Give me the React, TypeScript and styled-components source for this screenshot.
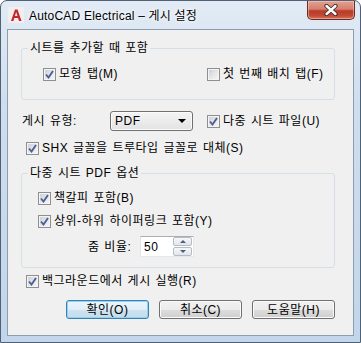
import styled, { createGlobalStyle } from "styled-components";

const GlobalStyle = createGlobalStyle`
  html, body {
    margin: 0;
    padding: 0;
    background: #fff;
  }
  body {
    font-family: "Liberation Sans", "Noto Sans CJK KR", sans-serif;
    font-size: 12px;
    letter-spacing: 0.5px;
    word-spacing: 1px;
    color: #000;
  }
  * {
    box-sizing: border-box;
  }
`;

const Window = styled.div`
  width: 361px;
  height: 343px;
  border: 1px solid #4f6275;
  border-radius: 7px 7px 0 0;
  background: linear-gradient(180deg, #e2ebf5 0%, #cfdeee 30%, #c2d5ea 100%);
  padding: 0 6px 6px 6px;
  display: flex;
  flex-direction: column;
`;

const TitleBar = styled.div`
  height: 28px;
  margin: 0 -6px;
  padding: 0 5px 0 7px;
  display: flex;
  align-items: flex-start;
`;

const AppIcon = styled.svg`
  width: 16px;
  height: 16px;
  margin-top: 6px;
  flex: none;
`;

const Title = styled.div`
  margin: 7px 0 0 5px;
  line-height: 16px;
  font-size: 12px;
  letter-spacing: 0.2px;
  word-spacing: 0;
  text-shadow: 0 0 6px #fff, 0 0 3px #fff;
`;

const CloseButton = styled.div`
  margin-left: auto;
  width: 48px;
  height: 19px;
  border: 1px solid #6b2b22;
  border-top: none;
  border-radius: 0 0 5px 5px;
  background: linear-gradient(180deg, #e3a091 0%, #d4806e 45%, #bb3a27 55%, #c04a35 80%, #d2735a 100%);
  box-shadow: inset 0 0 0 1px rgba(255, 220, 210, 0.45);
  display: flex;
  align-items: center;
  justify-content: center;

  svg {
    width: 14px;
    height: 12px;
  }
`;

const Client = styled.div`
  flex: 1;
  border: 1px solid #8c9db0;
  background: #f0f0f0;
  padding: 11px 18px 0 13px;
  display: flex;
  flex-direction: column;
`;

const Group = styled.fieldset<{ $top?: number }>`
  margin: ${p => p.$top ?? 0}px 0 0 0;
  border: 1px solid #d5dfe5;
  border-radius: 3px;
  padding: 0;
  min-width: 0;
`;

const Legend = styled.legend`
  margin-left: 6px;
  padding: 0 2px;
  line-height: 14px;
`;

const GroupBody = styled.div<{ $padLeft: number; $padTop: number; $padBottom: number }>`
  padding: ${p => p.$padTop}px 0 ${p => p.$padBottom}px ${p => p.$padLeft}px;
  display: flex;
  flex-direction: column;
`;

const CheckRow = styled.div`
  display: grid;
  grid-template-columns: 164px 1fr;
`;

const CheckLabel = styled.label<{ $indent?: number; $top?: number }>`
  display: flex;
  align-items: center;
  gap: 3px;
  height: 14px;
  line-height: 14px;
  white-space: nowrap;
  margin-left: ${p => p.$indent ?? 0}px;
  margin-top: ${p => p.$top ?? 0}px;
`;

const Box = styled.span`
  width: 13px;
  height: 13px;
  flex: none;
  border: 1px solid #8e8f8f;
  background: linear-gradient(135deg, #c9cbce 0%, #e4e5e7 50%, #f7f7f7 100%);
  box-shadow: inset 0 0 0 1px #f4f4f4;
  display: flex;
  align-items: center;
  justify-content: center;

  svg {
    width: 9px;
    height: 9px;
  }
`;

const TypeRow = styled.div`
  display: flex;
  align-items: center;
  margin: 11px 0 0 1px;
  height: 20px;
`;

const FieldLabel = styled.span<{ $width: number }>`
  width: ${p => p.$width}px;
  flex: none;
  line-height: 14px;
`;

const Combo = styled.div`
  width: 83px;
  height: 20px;
  border: 1px solid #707070;
  border-radius: 3px;
  background: linear-gradient(180deg, #f4f4f4 0%, #ececec 50%, #e2e2e2 100%);
  box-shadow: inset 0 0 0 1px #fbfbfb;
  display: flex;
  align-items: center;
  padding: 0 6px 0 4px;
  margin-right: 14px;

  span {
    flex: 1;
  }
`;

const Arrow = styled.i`
  width: 0;
  height: 0;
  border-left: 4px solid transparent;
  border-right: 4px solid transparent;
  border-top: 4px solid #000;
`;

const ZoomRow = styled.div`
  display: flex;
  align-items: center;
  margin: 8px 0 0 50px;
`;

const SpinEdit = styled.div`
  width: 54px;
  height: 21px;
  border: 1px solid #abadb3;
  border-left-color: #e2e3ea;
  border-right-color: #e3e9ef;
  border-bottom-color: #e3e9ef;
  background: #fff;
  display: flex;
  align-items: center;
  padding: 0 1px 0 3px;

  span {
    flex: 1;
  }
`;

const SpinButtons = styled.div`
  width: 19px;
  height: 19px;
  display: flex;
  flex-direction: column;
  gap: 1px;
`;

const SpinPart = styled.div<{ $down?: boolean }>`
  flex: 1;
  border: 1px solid #b7bcc4;
  border-radius: 2px;
  background: linear-gradient(180deg, #f6f7f9 0%, #e3e6ea 100%);
  display: flex;
  align-items: center;
  justify-content: center;

  &::after {
    content: "";
    width: 0;
    height: 0;
    border-left: 3px solid transparent;
    border-right: 3px solid transparent;
    ${p => (p.$down ? "border-top: 3px solid #4a5f84;" : "border-bottom: 3px solid #4a5f84;")}
  }
`;

const ButtonRow = styled.div`
  display: flex;
  gap: 10px;
  margin: 12px 0 0 45px;
`;

const Button = styled.button<{ $default?: boolean }>`
  width: 85px;
  height: 19px;
  padding: 0;
  font: inherit;
  font-size: 12px;
  line-height: 14px;
  letter-spacing: 0.5px;
  color: #000;
  border: 1px solid ${p => (p.$default ? "#3c7fb1" : "#707070")};
  border-radius: 3px;
  background: ${p =>
    p.$default
      ? "linear-gradient(180deg, #eaf6fd 0%, #e0eef7 50%, #cfe3f0 51%, #c4dbea 100%)"
      : "linear-gradient(180deg, #f2f2f2 0%, #ebebeb 50%, #dddddd 51%, #cfcfcf 100%)"};
  box-shadow: inset 0 0 0 1px ${p => (p.$default ? "#8fd3f5" : "#fbfbfb")};
`;

function Check({ checked }: { checked: boolean }) {
  return (
    <Box>
      {checked && (
        <svg viewBox="0 0 9 9">
          <path d="M1 4.5 L3.5 7.5 L8 1" fill="none" stroke="#4b5f9b" strokeWidth="1.9" />
        </svg>
      )}
    </Box>
  );
}

export default function App() {
  return (
    <>
      <GlobalStyle />
      <Window>
        <TitleBar>
          <AppIcon viewBox="0 0 16 16">
            <rect x="0" y="0" width="16" height="16" fill="#f3eded" />
            <path d="M3 14 L7 2.5 L9.5 2.5 L13.5 14 L11 14 L10 11 L6.3 11 L5.4 14 Z M6.9 9 L9.4 9 L8.2 5 Z" fill="#c4262e" fillRule="evenodd" />
          </AppIcon>
          <Title>AutoCAD Electrical – 게시 설정</Title>
          <CloseButton>
            <svg viewBox="0 0 14 12">
              <path d="M2.5 2 L11.5 10 M11.5 2 L2.5 10" stroke="#3a2a28" strokeWidth="4.2" strokeLinecap="round" />
              <path d="M2.5 2 L11.5 10 M11.5 2 L2.5 10" stroke="#fff" strokeWidth="2.4" strokeLinecap="round" />
            </svg>
          </CloseButton>
        </TitleBar>
        <Client>
          <Group>
            <Legend>시트를 추가할 때 포함</Legend>
            <GroupBody $padLeft={21} $padTop={12} $padBottom={18}>
              <CheckRow>
                <CheckLabel>
                  <Check checked />
                  모형 탭(M)
                </CheckLabel>
                <CheckLabel>
                  <Check checked={false} />
                  첫 번째 배치 탭(F)
                </CheckLabel>
              </CheckRow>
            </GroupBody>
          </Group>

          <TypeRow>
            <FieldLabel $width={88}>게시 유형:</FieldLabel>
            <Combo>
              <span>PDF</span>
              <Arrow />
            </Combo>
            <CheckLabel>
              <Check checked />
              다중 시트 파일(U)
            </CheckLabel>
          </TypeRow>

          <CheckLabel $indent={5} $top={10}>
            <Check checked />
            SHX 글꼴을 트루타입 글꼴로 대체(S)
          </CheckLabel>

          <Group $top={11}>
            <Legend>다중 시트 PDF 옵션</Legend>
            <GroupBody $padLeft={16} $padTop={11} $padBottom={10}>
              <CheckLabel>
                <Check checked />
                책갈피 포함(B)
              </CheckLabel>
              <CheckLabel $top={9}>
                <Check checked />
                상위-하위 하이퍼링크 포함(Y)
              </CheckLabel>
              <ZoomRow>
                <FieldLabel $width={52}>줌 비율:</FieldLabel>
                <SpinEdit>
                  <span>50</span>
                  <SpinButtons>
                    <SpinPart />
                    <SpinPart $down />
                  </SpinButtons>
                </SpinEdit>
              </ZoomRow>
            </GroupBody>
          </Group>

          <CheckLabel $indent={5} $top={6}>
            <Check checked />
            백그라운드에서 게시 실행(R)
          </CheckLabel>

          <ButtonRow>
            <Button $default>확인(O)</Button>
            <Button>취소(C)</Button>
            <Button>도움말(H)</Button>
          </ButtonRow>
        </Client>
      </Window>
    </>
  );
}
